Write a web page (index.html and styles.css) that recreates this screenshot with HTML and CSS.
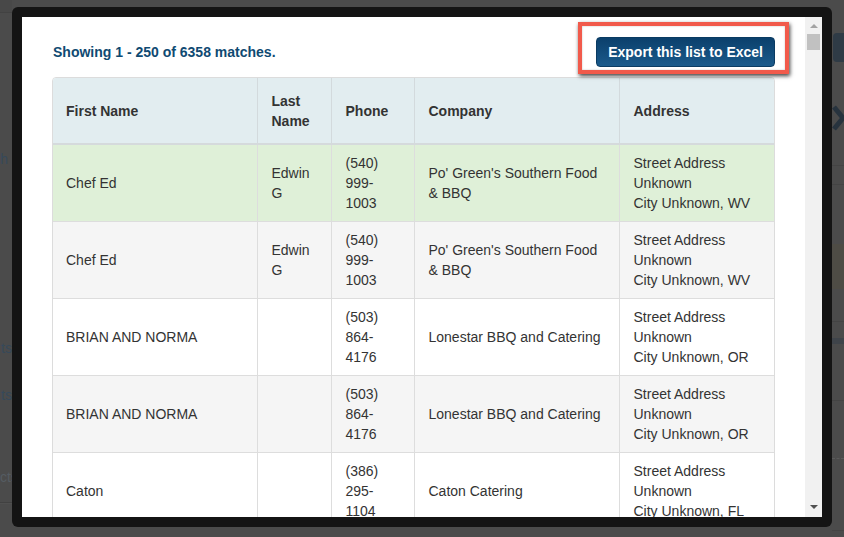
FILE: index.html
```html
<!DOCTYPE html>
<html lang="en">
<head>
<meta charset="utf-8">
<title>Matches</title>
<link rel="stylesheet" href="styles.css">
</head>
<body>
<div class="page">
  <aside class="side-left">
    <div class="topbar"></div>
    <div class="frag frag-link f1">h</div>
    <div class="frag frag-link f2">ts</div>
    <div class="frag frag-link f3">ts</div>
    <div class="frag frag-muted f4">cts</div>
    <div class="rule-left"></div>
  </aside>
  <main class="page-main"></main>
  <aside class="side-right">
    <div class="ghost-btn"></div>
    <svg class="chev" width="12" height="30" viewBox="0 0 12 30"><path d="M2 4 L11 15 L2 26" fill="none" stroke="#27333e" stroke-width="5" stroke-linejoin="round"/></svg>
    <div class="rline rl1"></div>
    <div class="rline rl2"></div>
    <div class="rtint"></div>
    <div class="rline rl3"></div>
    <div class="rband"></div>
    <div class="rline rl4"></div>
    <div class="rdash"></div>
    <div class="rline rl5"></div>
  </aside>
</div>

<div class="modal">
  <div class="modal-body">
    <div class="toolbar">
      <div class="summary">Showing 1 - 250 of 6358 matches.</div>
      <button class="btn-export" type="button">Export this list to Excel</button>
    </div>
    <div class="table-wrap">
      <table class="results">
        <colgroup>
          <col class="c-first">
          <col class="c-last">
          <col class="c-phone">
          <col class="c-company">
          <col class="c-address">
        </colgroup>
        <thead>
          <tr>
            <th>First Name</th>
            <th>Last Name</th>
            <th>Phone</th>
            <th>Company</th>
            <th>Address</th>
          </tr>
        </thead>
        <tbody>
          <tr class="row-success">
            <td>Chef Ed</td>
            <td>Edwin G</td>
            <td>(540) 999-1003</td>
            <td>Po' Green's Southern Food &amp; BBQ</td>
            <td>Street Address Unknown<br>City Unknown, WV</td>
          </tr>
          <tr class="row-alt">
            <td>Chef Ed</td>
            <td>Edwin G</td>
            <td>(540) 999-1003</td>
            <td>Po' Green's Southern Food &amp; BBQ</td>
            <td>Street Address Unknown<br>City Unknown, WV</td>
          </tr>
          <tr>
            <td>BRIAN AND NORMA</td>
            <td></td>
            <td>(503) 864-4176</td>
            <td>Lonestar BBQ and Catering</td>
            <td>Street Address Unknown<br>City Unknown, OR</td>
          </tr>
          <tr class="row-alt">
            <td>BRIAN AND NORMA</td>
            <td></td>
            <td>(503) 864-4176</td>
            <td>Lonestar BBQ and Catering</td>
            <td>Street Address Unknown<br>City Unknown, OR</td>
          </tr>
          <tr>
            <td>Caton</td>
            <td></td>
            <td>(386) 295-1104</td>
            <td>Caton Catering</td>
            <td>Street Address Unknown<br>City Unknown, FL</td>
          </tr>
        </tbody>
      </table>
    </div>
  </div>
  <div class="scrollbar">
    <span class="arrow arrow-up"></span>
    <span class="thumb"></span>
    <span class="track"></span>
    <span class="arrow arrow-down"></span>
  </div>
</div>
</body>
</html>
```

FILE: styles.css
```css
html, body {
  margin: 0;
  padding: 0;
}

body {
  width: 844px;
  height: 537px;
  overflow: hidden;
  background: #4b4b4b;
  font-family: "Liberation Sans", Arial, sans-serif;
  font-size: 14px;
  line-height: 20px;
  color: #333;
  position: relative;
}

/* ---------- dimmed page behind the overlay ---------- */
.page {
  display: flex;
  height: 537px;
}

.side-left {
  width: 12px;
  display: flex;
  flex-direction: column;
}

.topbar {
  height: 12px;
  flex: none;
  background: #484848;
  border-bottom: 1px solid #424242;
}

.frag {
  flex: none;
  height: 20px;
  text-align: right;
  white-space: nowrap;
}

.frag-link { color: #36495a; }
.frag-muted { color: #555c62; }

.f1 { margin-top: 136px; padding-right: 4px; }
.f2 { margin-top: 169px; }
.f3 { margin-top: 27px; }
.f4 { margin-top: 62px; }

.rule-left {
  margin-top: 15px;
  flex: none;
  height: 1px;
  background: #414141;
  box-shadow: 0 1px 0 #505050;
}

.page-main {
  flex: 1;
}

.side-right {
  width: 12px;
  overflow: hidden;
  display: flex;
  flex-direction: column;
}

.ghost-btn {
  flex: none;
  margin: 33px 0 0 1px;
  height: 29px;
  background: #2f3b46;
  border-radius: 4px 0 0 4px;
}

.chev {
  flex: none;
  display: block;
  margin-top: 41px;
}

.rline {
  flex: none;
  height: 1px;
  background: #444;
}

.rl1 { margin-top: 32px; }
.rl2 { margin-top: 18px; }
.rtint {
  flex: none;
  margin-top: 59px;
  height: 45px;
  background: #4e4c45;
}
.rl3 { margin-top: 32px; }
.rband {
  flex: none;
  margin-top: 16px;
  height: 6px;
  background: #3f444a;
}
.rl4 { margin-top: 56px; }
.rdash {
  flex: none;
  margin-top: 57px;
  height: 0;
  border-top: 1px dashed #5a5a5a;
}
.rl5 { margin-top: 71px; }

/* ---------- modal ---------- */
.modal {
  position: absolute;
  left: 12px;
  top: 7px;
  width: 800px;
  height: 500px;
  padding: 10px;
  background: #141414;
  border-radius: 6px;
  display: flex;
}

.modal-body {
  flex: 1;
  background: #fff;
  overflow: hidden;
  padding: 20px 30px 0;
}

.toolbar {
  display: flex;
  justify-content: space-between;
  align-items: center;
  margin-bottom: 10px;
}

.summary {
  font-weight: bold;
  color: #0f4a72;
  padding-left: 1px;
}

.btn-export {
  position: relative;
  font-family: "Liberation Sans", Arial, sans-serif;
  font-size: 14px;
  font-weight: bold;
  line-height: 18px;
  color: #fff;
  padding: 5px 11px;
  border: 1px solid #0a3b62;
  border-radius: 4px;
  background: linear-gradient(#0b406c, #1a5a8b);
  cursor: pointer;
}

.btn-export::after {
  content: "";
  position: absolute;
  left: -19px;
  top: -16px;
  right: -15px;
  bottom: -8px;
  border: 4px solid #f15a4b;
  box-shadow: 1px 2px 4px rgba(0, 0, 0, 0.75), inset 0 0 2px rgba(0, 0, 0, 0.25);
  pointer-events: none;
}

.table-wrap {
  border: 1px solid #dcdcdc;
  border-radius: 4px;
  overflow: hidden;
}

.results {
  width: 721px;
  table-layout: fixed;
  border-collapse: collapse;
  border-style: hidden;
}

.c-first { width: 204px; }
.c-last { width: 74px; }
.c-phone { width: 83px; }
.c-company { width: 205px; }
.c-address { width: 155px; }

.results th,
.results td {
  text-align: left;
  vertical-align: middle;
  border: 1px solid #dddddd;
}

.results th {
  background: #e2edf0;
  font-weight: bold;
  color: #333;
  padding: 13px 12px 12px 14px;
  border-color: #d3dadd;
  border-bottom: 2px solid #d5dadc;
}

.results td {
  padding: 8px 12px 8px 14px;
  color: #333;
}

.results th:first-child,
.results td:first-child {
  padding-left: 13px;
}

.row-success td {
  background: #dff0d8;
}

.row-alt td {
  background: #f5f5f5;
}

/* ---------- fake scrollbar ---------- */
.scrollbar {
  width: 17px;
  flex: none;
  background: #f1f1f1;
  display: flex;
  flex-direction: column;
  align-items: center;
}

.arrow {
  display: block;
  width: 0;
  height: 0;
  border-left: 4px solid transparent;
  border-right: 4px solid transparent;
}

.arrow-up {
  margin-top: 7px;
  border-bottom: 4px solid #a3a3a3;
}

.thumb {
  display: block;
  margin-top: 6px;
  width: 13px;
  height: 16px;
  background: #c1c1c1;
}

.track {
  flex: 1;
}

.arrow-down {
  margin-bottom: 8px;
  border-top: 4px solid #505050;
}
```
